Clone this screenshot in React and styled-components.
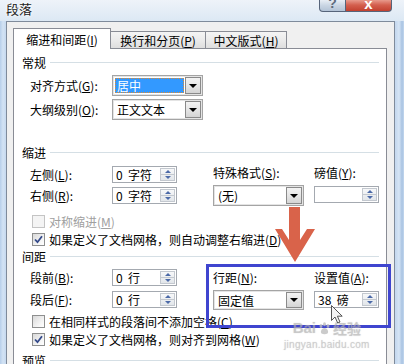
import React from 'react'
import styled, { createGlobalStyle, css } from 'styled-components'

const GlobalStyle = createGlobalStyle`
html, body {
  margin: 0;
  padding: 0;
  width: 404px;
  height: 364px;
  overflow: hidden;
}
body {
  font-family: "Noto Sans CJK SC", "Liberation Sans", sans-serif;
  font-size: 12px;
  color: #000;
}
`

const Window = styled.div`
position: relative;
width: 404px;
height: 364px;
overflow: hidden;
display: flex;
flex-direction: column;
background: linear-gradient(90deg, #b7cfea 0px, #d3e3f4 3px, #c6d9ef 6px, #c6d9ef 396px, #d6e5f5 399px, #a9c3e2 402px, #c2d7ee 404px);
`

const TitleBar = styled.div`
height: 21px;
display: flex;
align-items: flex-start;
padding-left: 6px;
background: linear-gradient(180deg, #eef3f9 0%, #dce8f4 100%);
`

const Title = styled.div`
font-size: 13px;
line-height: 15px;
margin-top: 1px;
color: #202020;
text-shadow: 0 0 4px #fff, 0 0 2px #fff;
`

const Caption = styled.div`
margin-left: auto;
margin-right: 12px;
display: flex;
`

const CapButton = styled.div`
box-sizing: border-box;
width: ${p => p.w}px;
height: 12px;
border: 1px solid #56647a;
border-top: none;
overflow: hidden;
display: flex;
justify-content: center;
font-family: "Liberation Sans", sans-serif;
font-weight: bold;
${p => p.close ? css`
  background: linear-gradient(180deg, #e89a8c 0%, #d4604f 45%, #c2402f 100%);
  border-bottom-right-radius: 4px;
  border-left: none;
  color: #fff;
  font-size: 15px;
  line-height: 8px;
` : css`
  background: linear-gradient(180deg, #e8eef5 0%, #c9d5e3 50%, #b3c3d6 100%);
  border-bottom-left-radius: 4px;
  color: #5d6b7d;
  font-size: 14px;
  line-height: 7px;
`}
`

const Client = styled.div`
flex: 1;
min-height: 0;
margin: 0 9px 0 6px;
border: 1px solid #7f8b9b;
border-bottom: none;
background: #f0f0f0;
padding: 6px 7px 0 6px;
display: flex;
flex-direction: column;
`

const Tabs = styled.div`
position: relative;
z-index: 1;
display: flex;
align-items: flex-end;
height: 20px;
`

const Tab = styled.div`
box-sizing: border-box;
width: ${p => p.w}px;
margin-left: ${p => p.first ? 0 : -1}px;
border: 1px solid #898c95;
border-bottom: none;
text-align: center;
line-height: 13px;
white-space: nowrap;
${p => p.active ? css`
  height: 21px;
  margin-bottom: -1px;
  padding-top: 4px;
  background: #fff;
` : css`
  height: 17px;
  padding-top: 2px;
  background: linear-gradient(180deg, #f4f4f4 0%, #ebebeb 50%, #dedede 100%);
`}
`

const Page = styled.div`
flex: 1;
background: #fff;
border: 1px solid #898c95;
border-bottom: none;
padding: 0 7px 0 8px;
display: flex;
flex-direction: column;
`

const Group = styled.div`
display: flex;
align-items: center;
height: 13px;
line-height: 13px;
margin-top: ${p => p.mt}px;
`

const GroupLine = styled.div`
flex: 1;
height: 1px;
background: #d5dfe5;
margin-left: 4px;
`

const Row = styled.div`
display: flex;
align-items: center;
padding-left: 8px;
margin-top: ${p => p.mt || 0}px;
`

const Label = styled.div`
width: ${p => p.w || 82}px;
line-height: 13px;
white-space: nowrap;
color: ${p => p.disabled ? '#a0a0a0' : '#000'};
`

const Combo = styled.div`
box-sizing: border-box;
width: 91px;
height: ${p => p.h}px;
margin-top: ${p => p.mt || 0}px;
border: 1px solid #a4a4a4;
box-shadow: inset 0 0 0 1px #e4e4e4;
background: #fff;
padding: 2px 1px 2px 2px;
display: flex;
`

const ComboText = styled.div`
flex: 1;
display: flex;
align-items: center;
padding-left: 2px;
line-height: 13px;
white-space: nowrap;
${p => p.selected && css`
  background: #3399ff;
  color: #fff;
  outline: 1px dotted #e38b2d;
  outline-offset: -1px;
`}
`

const DropBtn = styled.div`
box-sizing: border-box;
width: 16px;
margin: -1px 0 -1px 1px;
border: 1px solid #8a8a8a;
background: linear-gradient(180deg, #f3f3f3 0%, #e6e6e6 50%, #d4d4d4 100%);
display: flex;
align-items: center;
justify-content: center;
&::after {
  content: "";
  border-left: 4px solid transparent;
  border-right: 4px solid transparent;
  border-top: 4px solid #000;
}
`

const Spin = styled.div`
box-sizing: border-box;
width: 65px;
height: 17px;
margin-top: ${p => p.mt || 0}px;
border: 1px solid #a4a9b0;
background: #fff;
display: flex;
padding: 1px;
`

const SpinText = styled.div`
flex: 1;
padding-left: 2px;
line-height: 13px;
white-space: pre;
`

const SpinBtn = styled.div`
box-sizing: border-box;
width: 15px;
border: 1px solid #c3c8cf;
display: flex;
flex-direction: column;
background: linear-gradient(180deg, #f7f8f9 0%, #e2e6ea 100%);
`

const SpinHalf = styled.div`
flex: 1;
display: flex;
align-items: center;
justify-content: center;
border-top: ${p => p.down ? '1px solid #c3c8cf' : 'none'};
&::after {
  content: "";
  border-left: 3px solid transparent;
  border-right: 3px solid transparent;
  ${p => p.down ? 'border-top: 3px solid #4c6aa8;' : 'border-bottom: 3px solid #4c6aa8;'}
}
`

const Block = styled.div`
display: flex;
align-items: flex-start;
padding-left: 8px;
margin-top: ${p => p.mt}px;
`

const Col = styled.div`
display: flex;
flex-direction: column;
gap: ${p => p.gap || 0}px;
width: ${p => p.w ? p.w + 'px' : 'auto'};
margin-left: ${p => p.ml || 0}px;
padding-top: ${p => p.pt || 0}px;
`

const SpinRow = styled.div`
display: flex;
align-items: center;
`

const CheckRow = styled.div`
display: flex;
align-items: center;
height: 18px;
padding-left: 10px;
margin-top: ${p => p.mt || 0}px;
line-height: 13px;
white-space: nowrap;
color: ${p => p.disabled ? '#a0a0a0' : '#000'};
`

const Box = styled.span`
box-sizing: border-box;
width: 13px;
height: 13px;
margin-right: 4px;
border: 1px solid ${p => p.disabled ? '#c4c4c4' : '#8e8f8f'};
background: ${p => p.disabled ? '#f4f4f4' : 'linear-gradient(135deg, #d9d9d9 0%, #f6f6f6 70%, #fff 100%)'};
display: flex;
align-items: center;
justify-content: center;
flex-shrink: 0;
`

const Highlight = styled.div`
position: absolute;
left: 206px;
top: 264px;
width: 185px;
height: 64px;
box-sizing: border-box;
border: 3px solid #3f45cf;
`

const Arrow = styled.svg`
position: absolute;
left: 270px;
top: 205px;
`

const Cursor = styled.svg`
position: absolute;
left: 331px;
top: 305px;
`

const Watermark = styled.div`
position: absolute;
left: 284px;
top: 321px;
color: rgba(190, 190, 190, 0.55);
text-shadow: 0 0 1px rgba(120, 120, 120, 0.35);
display: flex;
flex-direction: column;
align-items: center;
`

const MarkTop = styled.div`
display: flex;
align-items: center;
gap: 2px;
height: 14px;
font-family: "Liberation Sans", sans-serif;
font-weight: bold;
font-size: 15px;
line-height: 14px;
`

const MarkCn = styled.span`
font-family: "Noto Sans CJK SC", sans-serif;
font-size: 14px;
line-height: 14px;
font-weight: bold;
`

const MarkUrl = styled.div`
margin-top: 4px;
font-family: "Liberation Sans", sans-serif;
font-size: 10px;
line-height: 11px;
letter-spacing: 0.3px;
`

const Check = () => (
    <svg width="9" height="9" viewBox="0 0 9 9">
        <path d="M1 4.5 L3.5 7.2 L8 1.2" fill="none" stroke="#33498a" strokeWidth="1.8" />
    </svg>
)

const Acc = ({ k }) => <>(<u>{k}</u>)</>

const App = () => {
    return (
        <Window>
            <GlobalStyle />
            <TitleBar>
                <Title>段落</Title>
                <Caption>
                    <CapButton w={27}>?</CapButton>
                    <CapButton w={46} close>x</CapButton>
                </Caption>
            </TitleBar>
            <Client>
                <Tabs>
                    <Tab first active w={98}>缩进和间距<Acc k="I" /></Tab>
                    <Tab w={96}>换行和分页<Acc k="P" /></Tab>
                    <Tab w={82}>中文版式<Acc k="H" /></Tab>
                </Tabs>
                <Page>
                    <Group mt={7}>常规<GroupLine /></Group>
                    <Row mt={6}>
                        <Label>对齐方式<Acc k="G" />:</Label>
                        <Combo h={21}><ComboText selected>居中</ComboText><DropBtn /></Combo>
                    </Row>
                    <Row mt={3}>
                        <Label>大纲级别<Acc k="O" />:</Label>
                        <Combo h={21}><ComboText>正文文本</ComboText><DropBtn /></Combo>
                    </Row>

                    <Group mt={26}>缩进<GroupLine /></Group>
                    <Block mt={7}>
                        <Col gap={4}>
                            <SpinRow>
                                <Label>左侧<Acc k="L" />:</Label>
                                <Spin><SpinText>0  字符</SpinText><SpinBtn><SpinHalf /><SpinHalf down /></SpinBtn></Spin>
                            </SpinRow>
                            <SpinRow>
                                <Label>右侧<Acc k="R" />:</Label>
                                <Spin><SpinText>0  字符</SpinText><SpinBtn><SpinHalf /><SpinHalf down /></SpinBtn></Spin>
                            </SpinRow>
                        </Col>
                        <Col w={91} ml={36}>
                            <Label w={91}>特殊格式<Acc k="S" />:</Label>
                            <Combo h={21} mt={6}><ComboText>(无)</ComboText><DropBtn /></Combo>
                        </Col>
                        <Col w={65} ml={10}>
                            <Label w={65}>磅值<Acc k="Y" />:</Label>
                            <Spin mt={7}><SpinText> </SpinText><SpinBtn><SpinHalf /><SpinHalf down /></SpinBtn></Spin>
                        </Col>
                    </Block>
                    <CheckRow mt={6} disabled><Box disabled />对称缩进<Acc k="M" /></CheckRow>
                    <CheckRow><Box><Check /></Box>如果定义了文档网格，则自动调整右缩进<Acc k="D" /></CheckRow>

                    <Group mt={2}>间距<GroupLine /></Group>
                    <Block mt={6}>
                        <Col gap={5}>
                            <SpinRow>
                                <Label>段前<Acc k="B" />:</Label>
                                <Spin><SpinText>0  行</SpinText><SpinBtn><SpinHalf /><SpinHalf down /></SpinBtn></Spin>
                            </SpinRow>
                            <SpinRow>
                                <Label>段后<Acc k="F" />:</Label>
                                <Spin><SpinText>0  行</SpinText><SpinBtn><SpinHalf /><SpinHalf down /></SpinBtn></Spin>
                            </SpinRow>
                        </Col>
                        <Col w={91} ml={36} pt={2}>
                            <Label w={91}>行距<Acc k="N" />:</Label>
                            <Combo h={20} mt={6}><ComboText>固定值</ComboText><DropBtn /></Combo>
                        </Col>
                        <Col w={65} ml={10} pt={2}>
                            <Label w={65}>设置值<Acc k="A" />:</Label>
                            <Spin mt={7}><SpinText>38  磅</SpinText><SpinBtn><SpinHalf /><SpinHalf down /></SpinBtn></Spin>
                        </Col>
                    </Block>
                    <CheckRow mt={2}><Box />在相同样式的段落间不添加空格<Acc k="C" /></CheckRow>
                    <CheckRow><Box><Check /></Box>如果定义了文档网格，则对齐到网格<Acc k="W" /></CheckRow>

                    <Group mt={6}>预览<GroupLine /></Group>
                </Page>
            </Client>

            <Highlight />
            <Arrow width="50" height="60" viewBox="0 0 50 60">
                <polygon points="19,2 30,2 30,35 37,24 45,24 25,57 5,24 12,24 19,35" fill="#d9634a" />
            </Arrow>
            <Watermark>
                <MarkTop>
                    <span>Bai</span>
                    <svg width="13" height="13" viewBox="0 0 13 13">
                        <g fill="rgba(190,190,190,0.8)">
                            <ellipse cx="3" cy="4" rx="1.5" ry="2" />
                            <ellipse cx="6.5" cy="2.3" rx="1.5" ry="2" />
                            <ellipse cx="10" cy="4" rx="1.5" ry="2" />
                            <path d="M6.5 6 C3.5 6 2 10 3.5 11.5 C5 12.5 8 12.5 9.5 11.5 C11 10 9.5 6 6.5 6 Z" />
                        </g>
                    </svg>
                    <MarkCn>经验</MarkCn>
                </MarkTop>
                <MarkUrl>jingyan.baidu.com</MarkUrl>
            </Watermark>
            <Cursor width="13" height="20" viewBox="0 0 13 20">
                <path d="M0.5 0.5 L0.5 15.5 L4 12 L6.7 18 L9 17 L6.4 11.2 L11.2 11.2 Z" fill="#f4f4f4" stroke="#555" strokeWidth="1" />
            </Cursor>
        </Window>
    )
}

export default App
